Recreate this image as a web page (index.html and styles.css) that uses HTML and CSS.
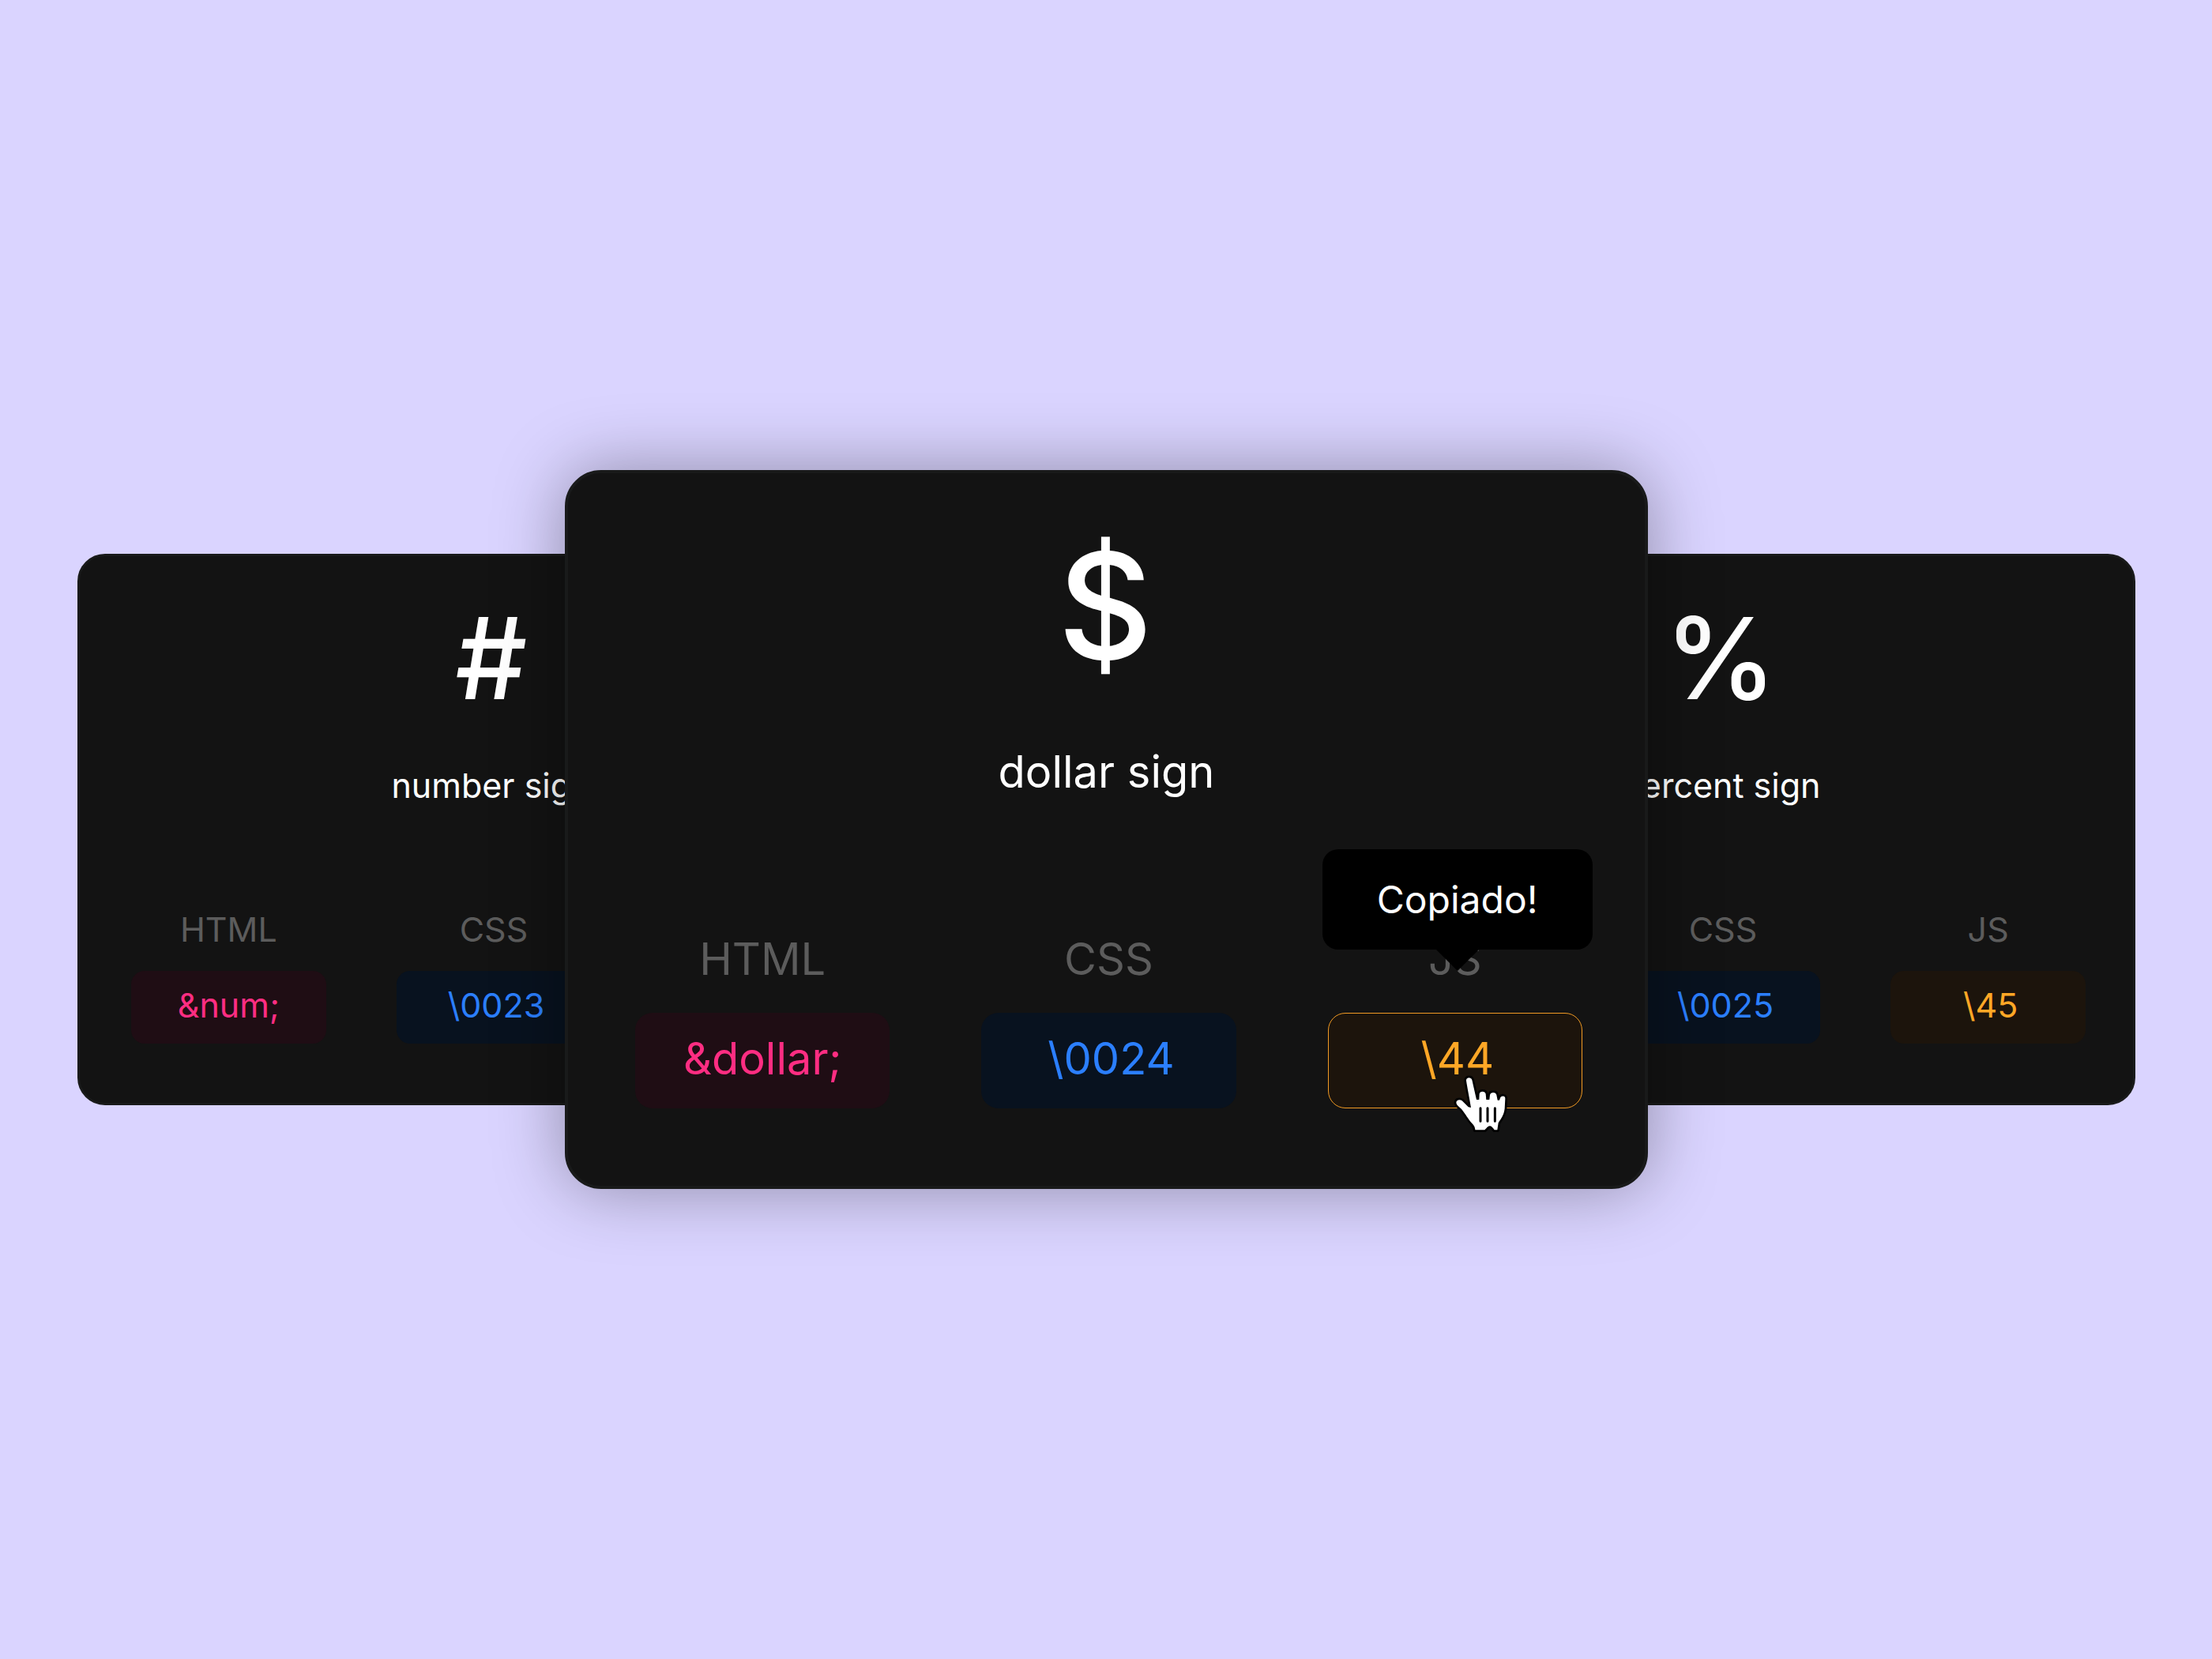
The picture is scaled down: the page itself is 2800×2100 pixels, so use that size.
FILE: index.html
```html
<!DOCTYPE html>
<html lang="pt-BR">
<head>
<meta charset="utf-8">
<meta name="viewport" content="width=device-width, initial-scale=1">
<title>Símbolos</title>
<link rel="stylesheet" href="styles.css">
</head>
<body>
<main class="stage">
  <article class="card card-left">
    <h2 class="symbol">#</h2>
    <p class="name">number sign</p>
    <div class="codes">
      <div class="code">
        <span class="label" id="num-html">HTML</span>
        <button type="button" class="pill html" aria-describedby="num-html">&amp;num;</button>
      </div>
      <div class="code">
        <span class="label" id="num-css">CSS</span>
        <button type="button" class="pill css" aria-describedby="num-css">\0023</button>
      </div>
      <div class="code">
        <span class="label" id="num-js">JS</span>
        <button type="button" class="pill js" aria-describedby="num-js">\43</button>
      </div>
    </div>
  </article>

  <article class="card card-main">
    <h2 class="symbol">$</h2>
    <p class="name">dollar sign</p>
    <div class="codes">
      <div class="code">
        <span class="label" id="dollar-html">HTML</span>
        <button type="button" class="pill html" aria-describedby="dollar-html">&amp;dollar;</button>
      </div>
      <div class="code">
        <span class="label" id="dollar-css">CSS</span>
        <button type="button" class="pill css" aria-describedby="dollar-css">\0024</button>
      </div>
      <div class="code">
        <span class="label" id="dollar-js">JS</span>
        <button type="button" class="pill js active" aria-describedby="dollar-js">\44</button>
        <div class="tooltip" role="status">Copiado!</div>
        <svg class="cursor" viewBox="180 60 210 225" aria-hidden="true">
          <path class="hand" d="M228 84C226 71 246 68 250 81L267 156L277 156L278 134C279 122 300 122 302 134L304 156L316 156L318 138C320 126 341 126 343 138L347 158L354 158L357 149C361 140 377 140 376 152L374 190C371 216 360 228 350 244L346 271L335 271C329 262 324 256 317 256C310 256 304 266 298 271L262 271C262 262 258 254 250 246C236 230 222 206 212 194C204 184 192 179 190 168C190 156 204 154 212 160L236 184L246 186C240 150 232 110 228 84Z"/>
          <path class="creases" d="M282 188V238M309 188V238M337 188V238"/>
        </svg>
      </div>
    </div>
  </article>

  <article class="card card-right">
    <h2 class="symbol">%</h2>
    <p class="name">percent sign</p>
    <div class="codes">
      <div class="code">
        <span class="label" id="percent-html">HTML</span>
        <button type="button" class="pill html" aria-describedby="percent-html">&amp;percnt;</button>
      </div>
      <div class="code">
        <span class="label" id="percent-css">CSS</span>
        <button type="button" class="pill css" aria-describedby="percent-css">\0025</button>
      </div>
      <div class="code">
        <span class="label" id="percent-js">JS</span>
        <button type="button" class="pill js" aria-describedby="percent-js">\45</button>
      </div>
    </div>
  </article>
</main>
</body>
</html>
```

FILE: styles.css
```css
* {
  box-sizing: border-box;
}

body {
  margin: 0;
  background: #dad4ff;
  color: #fff;
  font-family: Inter, "Liberation Sans", sans-serif;
  font-weight: 380;
}

/* Five tracks: the main card overlaps both side cards on tracks 2 and 4. */
.stage {
  display: grid;
  grid-template-columns:
    minmax(0, 617fr) minmax(0, 432fr) minmax(0, 507fr)
    minmax(0, 432fr) minmax(0, 617fr);
  align-items: center;
  align-content: center;
  min-height: 100vh;
  padding-inline: 98px 97px;
}

.card {
  grid-row: 1;
  display: flex;
  flex-direction: column;
  padding: 43px 60px 75px 65px;
  border: 3px solid #191a1a;
  border-radius: 35px;
  background: #131313;
  text-align: center;
}

.card-left {
  grid-column: 1 / 3;
}

.card-right {
  grid-column: 4 / 6;
}

.symbol {
  margin: 0 6px 0 0;
  font-size: 143px;
  line-height: 172px;
  font-weight: 500;
}

.name {
  margin: 49px 6px 130px 0;
  font-size: 43px;
  line-height: 52px;
}

.codes {
  display: grid;
  grid-template-columns: repeat(3, minmax(0, 1fr));
  gap: 89px;
}

.code {
  position: relative;
  display: flex;
  flex-direction: column;
  gap: 27px;
}

.label {
  color: #5c5c5c;
  font-size: 43px;
  line-height: 52px;
}

.pill {
  height: 92px;
  padding: 0 0 6px;
  border: 0;
  border-radius: 17px;
  font: inherit;
  font-size: 43px;
  line-height: 52px;
  cursor: pointer;
}

.html {
  background: #1f0d14;
  color: #ff2d82;
}

.css {
  padding-left: 6px;
  background: #08121f;
  color: #2b7fff;
}

.js {
  padding-left: 6px;
  background: #1c140c;
  color: #ffa726;
}

.card-main {
  grid-column: 2 / 5;
  z-index: 1;
  padding: 56px 79px 98px 85px;
  border-width: 4px;
  border-radius: 46px;
  box-shadow: 0 0 88px rgb(0 0 0 / 35%);
}

.card-main .symbol {
  margin-right: 9px;
  font-size: 186px;
  line-height: 224px;
}

.card-main .name {
  margin-block: 64px 169px;
  font-size: 56px;
  line-height: 68px;
}

.card-main .codes {
  gap: 116px;
}

.card-main .code {
  gap: 34px;
}

.card-main .label,
.card-main .pill {
  font-size: 56px;
  line-height: 68px;
}

.card-main .pill {
  height: 121px;
  padding-bottom: 6px;
  border-radius: 22px;
}

.card-main .active {
  border: 1px solid #f09a24;
}

.tooltip {
  position: absolute;
  bottom: 201px;
  left: -7px;
  width: 342px;
  padding: 34px 0 33px;
  border-radius: 20px;
  background: #000;
  font-size: 48px;
  line-height: 60px;
}

.tooltip::after {
  content: "";
  position: absolute;
  top: 100%;
  left: 50%;
  margin-left: -27px;
  border: 27px solid transparent;
  border-top-color: #000;
  border-bottom: 0;
}

.cursor {
  position: absolute;
  bottom: -32px;
  left: 159px;
  width: 70px;
  height: 75px;
  overflow: visible;
}

.hand {
  fill: #fff;
  stroke: #000;
  stroke-width: 16px;
  stroke-linejoin: round;
  paint-order: stroke;
}

.creases {
  fill: none;
  stroke: #000;
  stroke-width: 9px;
  stroke-linecap: round;
}
```
